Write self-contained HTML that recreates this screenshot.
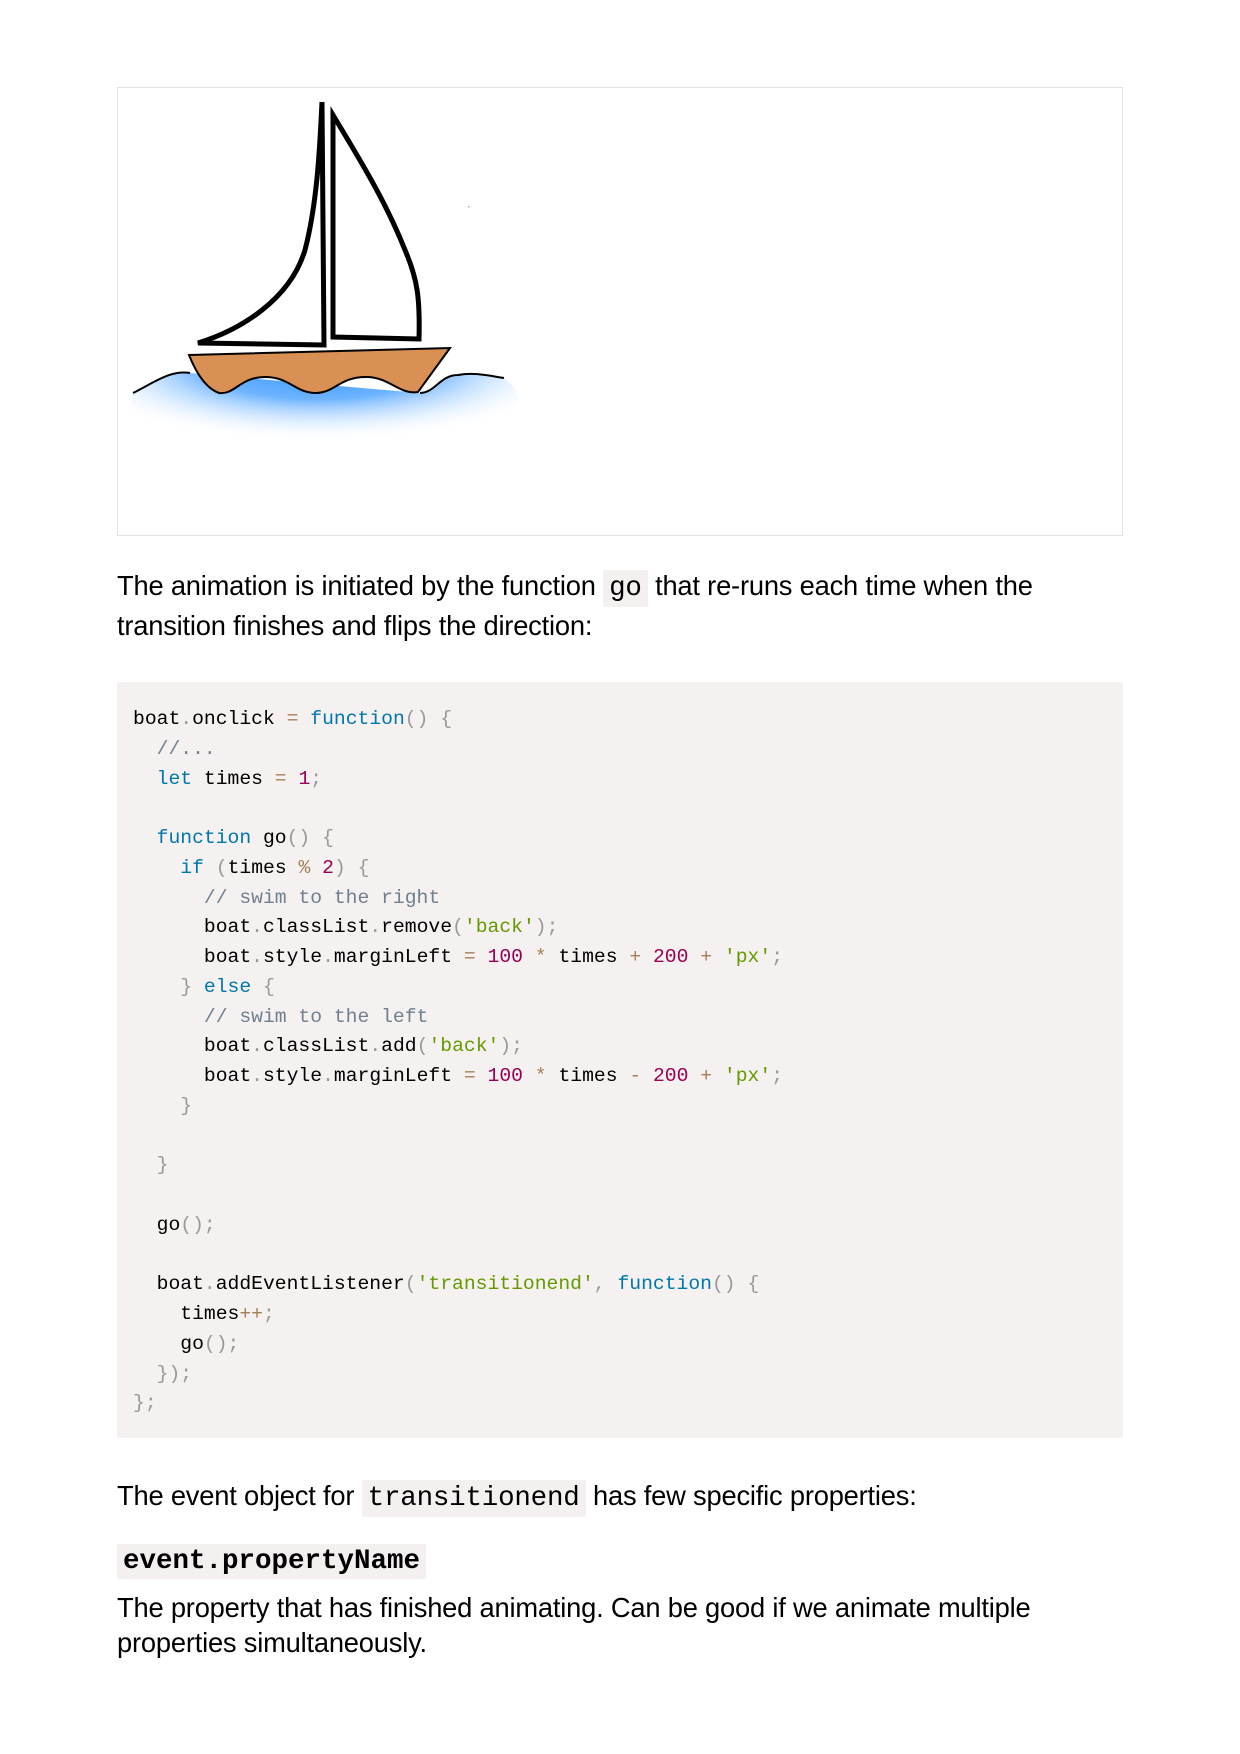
<!DOCTYPE html>
<html><head><meta charset="utf-8"><style>
html,body{margin:0;padding:0;background:#fff;}
body{width:1240px;height:1754px;position:relative;font-family:"Liberation Sans",sans-serif;color:#000;}
.frame{position:absolute;left:117px;top:87px;width:1004px;height:447px;border:1px solid #e3e3e3;}
p{position:absolute;left:117px;margin:0;font-size:27.3px;line-height:36.5px;width:1010px;letter-spacing:-0.2px;}
code{font-family:"Liberation Mono",monospace;background:#f3f0ef;padding:3px 6px;border-radius:2px;font-size:27.5px;}
pre{position:absolute;left:117px;top:682px;width:974px;height:722px;margin:0;padding:23px 16px 11px;background:#f4f1f0;font-family:"Liberation Mono",monospace;font-size:19.7px;line-height:29.75px;color:#000;}
.k{color:#0077aa}.s{color:#669900}.n{color:#990055}.o{color:#a67f59}.p{color:#999}.c{color:#708090}
.h{position:absolute;left:117px;top:1544px;height:35px;padding:0 6px;background:#f3f0ef;font-family:"Liberation Mono",monospace;font-weight:bold;font-size:27.5px;line-height:36px;}
</style></head><body>
<div class="frame"></div>
<svg style="position:absolute;left:0;top:0" width="1240" height="560">
<defs>
<radialGradient id="g" cx="0.5" cy="0.2" r="0.65"><stop offset="0" stop-color="#2f95ff"/><stop offset="0.45" stop-color="#6db3ff"/><stop offset="1" stop-color="#fff" stop-opacity="0"/></radialGradient>
<clipPath id="cl"><path d="M133 393 C155 382 170 370 190 373 L420 393 C435 393 440 375 458 375 C475 372 490 376 504 378 L520 378 L520 470 L120 470 Z"/></clipPath>
</defs>
<ellipse cx="318" cy="400" rx="200" ry="60" fill="url(#g)" clip-path="url(#cl)"/>
<path d="M133 393 C155 382 170 370 190 373" fill="none" stroke="#000" stroke-width="2"/>
<path d="M420 393 C435 393 440 375 458 375 C475 372 490 376 504 378" fill="none" stroke="#000" stroke-width="2"/>
<path d="M189 355 L450 348 L418 392 C400 395 390 378 368 377 C340 376 335 393 316 393 C295 393 290 377 265 377 C240 377 235 395 219 393 C205 388 195 370 189 355 Z" fill="#d89055" stroke="#000" stroke-width="2"/>
<path d="M322 102 L324 345 L198 343 C240 330 290 300 305 250 C318 200 320 140 322 102" fill="#fff" stroke="#000" stroke-width="5" stroke-linejoin="miter"/>
<path d="M333 115 L333 337 L419 339 C420 300 418 280 405 250 C385 200 360 160 333 115 Z" fill="#fff" stroke="#000" stroke-width="5"/>
<rect x="468" y="206" width="1.5" height="1.5" fill="#aaa"/>
</svg>
<p style="top:568px">The animation is initiated by the function <code>go</code> that re-runs each time when the transition finishes and flips the direction:</p>
<pre>boat<span class="p">.</span>onclick <span class="o">=</span> <span class="k">function</span><span class="p">()</span> <span class="p">{</span>
  <span class="c">//...</span>
  <span class="k">let</span> times <span class="o">=</span> <span class="n">1</span><span class="p">;</span>

  <span class="k">function</span> go<span class="p">()</span> <span class="p">{</span>
    <span class="k">if</span> <span class="p">(</span>times <span class="o">%</span> <span class="n">2</span><span class="p">)</span> <span class="p">{</span>
      <span class="c">// swim to the right</span>
      boat<span class="p">.</span>classList<span class="p">.</span>remove<span class="p">(</span><span class="s">'back'</span><span class="p">);</span>
      boat<span class="p">.</span>style<span class="p">.</span>marginLeft <span class="o">=</span> <span class="n">100</span> <span class="o">*</span> times <span class="o">+</span> <span class="n">200</span> <span class="o">+</span> <span class="s">'px'</span><span class="p">;</span>
    <span class="p">}</span> <span class="k">else</span> <span class="p">{</span>
      <span class="c">// swim to the left</span>
      boat<span class="p">.</span>classList<span class="p">.</span>add<span class="p">(</span><span class="s">'back'</span><span class="p">);</span>
      boat<span class="p">.</span>style<span class="p">.</span>marginLeft <span class="o">=</span> <span class="n">100</span> <span class="o">*</span> times <span class="o">-</span> <span class="n">200</span> <span class="o">+</span> <span class="s">'px'</span><span class="p">;</span>
    <span class="p">}</span>

  <span class="p">}</span>

  go<span class="p">();</span>

  boat<span class="p">.</span>addEventListener<span class="p">(</span><span class="s">'transitionend'</span><span class="p">,</span> <span class="k">function</span><span class="p">()</span> <span class="p">{</span>
    times<span class="o">++</span><span class="p">;</span>
    go<span class="p">();</span>
  <span class="p">});</span>
<span class="p">};</span></pre>
<p style="top:1478px">The event object for <code>transitionend</code> has few specific properties:</p>
<div class="h">event.propertyName</div>
<p style="top:1590px;line-height:35px">The property that has finished animating. Can be good if we animate multiple properties simultaneously.</p>
</body></html>
